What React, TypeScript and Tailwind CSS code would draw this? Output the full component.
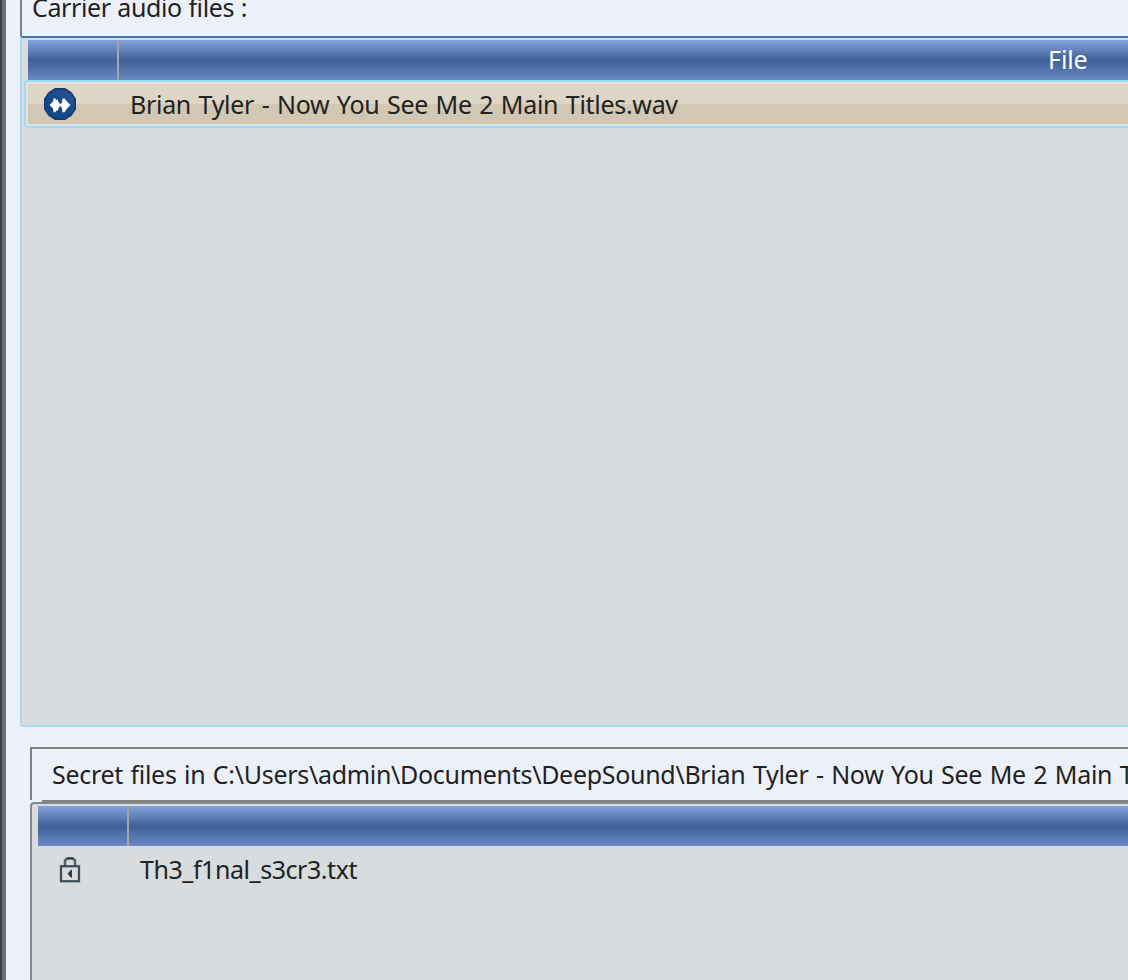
import type { ReactNode } from 'react';

function HeaderBar({ title }: { title?: string }) {
  return (
    <div className="flex h-10 shrink-0 bg-[linear-gradient(to_bottom,#83a3db_0%,#6483bd_25%,#3e5f97_50%,#5573ad_75%,#6a8bc5_100%)]">
      <div className="w-[91px] shrink-0 border-r-2 border-[#a5a5a5]" />
      <div className="pl-[929px] text-[25px] leading-[38px] tracking-[-0.1px] whitespace-pre text-white">{title}</div>
    </div>
  );
}

function FileName({ children }: { children: ReactNode }) {
  return <span className="text-[25px] leading-10 whitespace-pre">{children}</span>;
}

function WaveIcon() {
  return (
    <svg className="h-8 w-8 shrink-0" viewBox="0 0 32 32">
      <defs>
        <linearGradient id="disc" x1="0" y1="1" x2="1" y2="0">
          <stop offset="0" stopColor="#174080" />
          <stop offset="0.5" stopColor="#164b90" />
          <stop offset="1" stopColor="#315489" />
        </linearGradient>
      </defs>
      <path d="M11 1h10l6 4 4 6v10l-4 6-6 4H11l-6-4-4-6V11l4-6z" fill="url(#disc)" stroke="#123d78" strokeWidth="2" strokeLinejoin="round" />
      <path
        d="M5.500 17 9 13.500 9.500 10.500H11.500L12 12 13.500 11.500 14.500 14 16 15.750H17L18 14.500 18.500 10.500H20.500L22 12.500 23.500 14 26.500 17 23.500 20 22 22 20.500 24.250H18.500L18 20.500 17 18.250H16L14.500 20.500 13.500 23 12 22.500 11.500 24.250H9.500L9 20.500z"
        fill="#fff"
      />
    </svg>
  );
}

function LockIcon() {
  return (
    <svg className="h-[26px] w-[22px] shrink-0" viewBox="0 0 22 26" fill="none">
      <path d="M6 9V3.500L8 1.500h6l2 2V9" stroke="#536168" strokeWidth="2.500" />
      <path d="M8 1.250h6" stroke="#2d3e47" strokeWidth="1.750" />
      <rect x="2" y="9.250" width="18" height="15" stroke="#2d3e47" strokeOpacity="0.9" strokeWidth="2.250" />
      <path d="M8.500 16.750l3-3.500 1.500-.750v8.500l-1.500-.750z" fill="#2d3e47" />
    </svg>
  );
}

export default function App() {
  return (
    <div className="flex h-[980px] w-[1128px] overflow-hidden bg-[#ecf1f9] font-['Noto_Sans','Open_Sans',sans-serif] text-[#222]">
      <div className="w-0.5 shrink-0 bg-[#3e3e3e]" />
      <div className="w-1 shrink-0 bg-[#6c6a78]" />

      <div className="flex w-[1122px] shrink-0 flex-col">
        <section className="ml-3.5 flex h-[727px] shrink-0 flex-col">
          <div className="h-9 shrink-0 border-l-2 border-[#7f7f7f] pl-2.5">
            <h2 className="-mt-[11px] text-[25px] leading-9 tracking-[-0.4px] [word-spacing:0.6px] whitespace-pre">Carrier audio files :</h2>
          </div>
          <div className="flex-1 rounded-bl-[3px] border-t-2 border-b-2 border-l-2 border-t-[#397aad] border-b-[#b1d8ed] border-l-[#b1d8ed] bg-[#d8dcdf] pt-0.5">
            <div className="ml-1.5">
              <HeaderBar title="File" />
            </div>
            <div className="ml-0.5 h-12 rounded-l-[4px] border-y-2 border-l-2 border-[#9adbfb] bg-[#e9e2d8] py-0.5 pl-0.5">
              <div className="flex h-10 items-center bg-[linear-gradient(to_bottom,#ddd6c6_50%,#d2c7b2_50%)]">
                <div className="flex w-[102px] shrink-0 pl-4">
                  <WaveIcon />
                </div>
                <FileName>
                  <span className="tracking-[-0.3px] [word-spacing:1.35px]">Brian Tyler - Now You See Me 2 Main Titles.wav</span>
                </FileName>
              </div>
            </div>
          </div>
        </section>

        <section className="mt-5 ml-6 flex flex-1 flex-col">
          <div className="h-[53px] shrink-0 border-t-2 border-l-2 border-[#808080] pl-5">
            <h2 className="text-[25px] leading-[51px] tracking-[-0.3px] [word-spacing:1.3px] whitespace-pre">
              {'Secret files in C:\\Users\\admin\\Documents\\DeepSound\\Brian Tyler - Now You See Me 2 Main Titles.wav'}
            </h2>
          </div>
          <div className="ml-3 h-0.5 shrink-0 bg-[#808080]" />
          <div className="flex-1 rounded-tl-[4px] border-t-2 border-l-2 border-[#828790] bg-[#d8dcdf] pt-0.5 pl-1.5">
            <HeaderBar />
            <div className="flex h-12 items-center">
              <div className="flex w-[102px] shrink-0 pl-[21px]">
                <LockIcon />
              </div>
              <FileName>
                <span className="relative -top-px tracking-[-0.45px]">Th3_f1nal_s3cr3.txt</span>
              </FileName>
            </div>
          </div>
        </section>
      </div>
    </div>
  );
}
